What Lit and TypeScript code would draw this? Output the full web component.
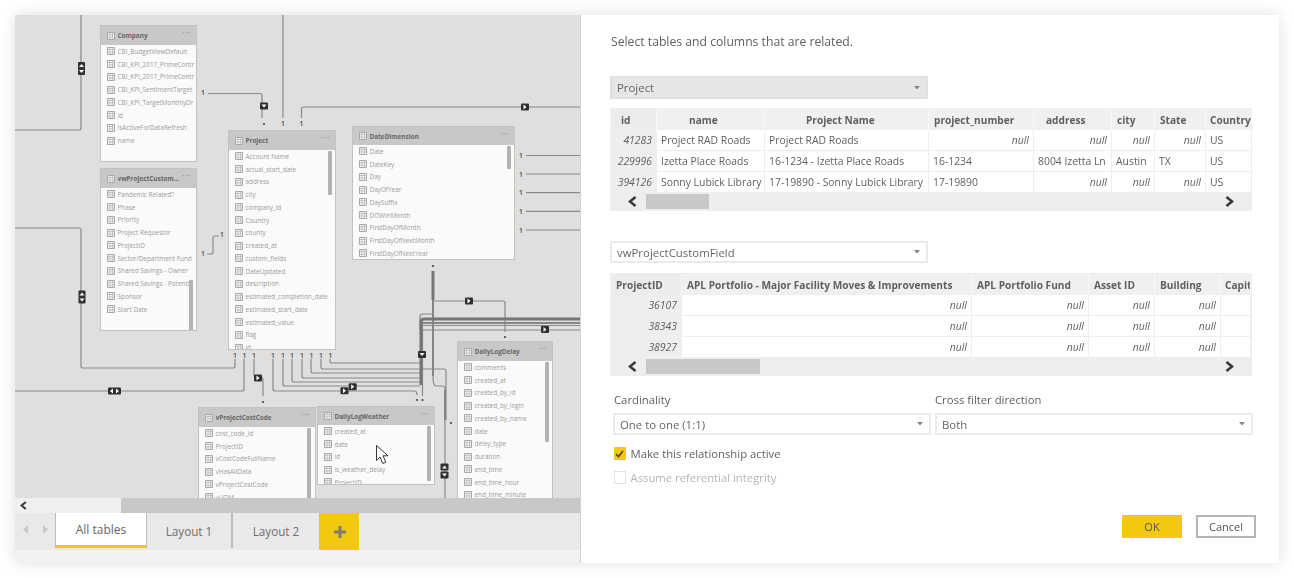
import { LitElement, html, css, svg } from "lit";
import { customElement } from "lit/decorators.js";

interface TableNode { name: string; x: number; y: number; w: number; h: number; head: number; rows: string[]; thumb?: [number, number, number]; }

const NODES: TableNode[] = [
  { name: "Company", x: 100, y: 25, w: 97, h: 137, head: 19, rows: ["CBI_BudgetViewDefault", "CBI_KPI_2017_PrimeContr", "CBI_KPI_2017_PrimeContr", "CBI_KPI_SentimentTarget", "CBI_KPI_TargetMonthlyDr", "id", "IsActiveForDataRefresh", "name"] },
  { name: "vwProjectCustom...", x: 100, y: 168, w: 97, h: 163, head: 19, thumb: [88, 111, 51], rows: ["Pandemic Related?", "Phase", "Priority", "Project Requestor", "ProjectID", "Sector/Department Fund", "Shared Savings - Owner", "Shared Savings - Potenti", "Sponsor", "Start Date"] },
  { name: "Project", x: 228, y: 130, w: 108, h: 220, head: 19, thumb: [99, 20, 44], rows: ["Account Name", "actual_start_date", "address", "city", "company_id", "Country", "county", "created_at", "custom_fields", "DateUpdated", "description", "estimated_completion_date", "estimated_start_date", "estimated_value", "flag", "id"] },
  { name: "DateDimension", x: 352, y: 126, w: 163, h: 134, head: 18, thumb: [154, 19, 23], rows: ["Date", "DateKey", "Day", "DayOfYear", "DaySuffix", "DOWInMonth", "FirstDayOfMonth", "FirstDayOfNextMonth", "FirstDayOfNextYear"] },
  { name: "vProjectCostCode", x: 198, y: 407, w: 118, h: 100, head: 19, thumb: [108, 20, 80], rows: ["cost_code_id", "ProjectID", "vCostCodeFullName", "vHasAllData", "vProjectCostCode", "vUOM"] },
  { name: "DailyLogWeather", x: 317, y: 406, w: 118, h: 79, head: 18, thumb: [109, 19, 55], rows: ["created_at", "date", "id", "is_weather_delay", "ProjectID"] },
  { name: "DailyLogDelay", x: 457, y: 341, w: 96, h: 170, head: 19, thumb: [87, 20, 80], rows: ["comments", "created_at", "created_by_id", "created_by_login", "created_by_name", "date", "delay_type", "duration", "end_time", "end_time_hour", "end_time_minute"] },
];

const LINES = [
  "M15 130H79q2 0 2-2V15",
  "M15 228H79q2 0 2 2V366q0 2 2 2H233q2 0 2-2V359",
  "M15 391H242q2 0 2-2V359",
  "M208 93.500H260q2 0 2 2V118",
  "M283 15V118",
  "M301.500 118V109q0-2 2-2H580",
  "M207 254H211q2 0 2-2V238q0-2 2-2H219",
  "M526 155.500H580", "M526 174H580", "M526 192.700H580", "M526 211.300H580", "M526 230H580",
  "M433 301H503q2 0 2 2V332",
  "M330 359V361q0 2 2 2H420",
  "M321 359V367q0 2 2 2H420",
  "M311 359V371q0 2 2 2H420",
  "M302 359V376q0 2 2 2H420",
  "M292 359V380q0 2 2 2H420",
  "M283 359V384q0 2 2 2H420",
  "M273 359V389q0 2 2 2H414q3 0 3 3V395",
  "M254 359V375q0 2 2 2H261q2 0 2 3V396",
  "M423 369H444q2 0 2 2V420",
  "M433 376q0 10 3 10H443q2 0 2 3V498",
  "M422.500 396V323",
  "M420 330V317q0-3 3-3H432",
  "M420 325.500H580", "M420 330H580",
];
const MEDIUM = ["M433 300V376", "M420 323H580", "M445 390V420"];
const THICK = ["M433 271V300", "M421 385V322q0-3 3-3H580"];

const ONES: [number, number][] = [
  [203, 95], [283, 126], [301.5, 126], [222, 237], [203, 256],
  [521, 158], [521, 177], [521, 195], [521, 214], [521, 233],
  [235, 358], [244.500, 358], [254, 358], [273, 358], [283, 358], [292, 358], [302, 358], [311.500, 358], [321, 358], [330.500, 358],
];
const STARS: [number, number][] = [[264, 126], [433, 268], [505, 339], [417, 402], [422.500, 402], [451, 425], [263, 404]];

type Mark = [number, number, "up" | "down" | "left" | "fwd" | "both-v" | "both-h"];
const MARKS: Mark[] = [
  [81.5, 68.5, "both-v"], [82, 297, "both-v"], [114.5, 391, "both-h"], [264, 106, "down"],
  [525, 107, "fwd"], [258, 378, "fwd"], [469, 301, "fwd"], [545, 329.5, "fwd"],
  [422, 354.5, "down"], [352.7, 386.7, "fwd"], [344.5, 390.7, "fwd"], [444.5, 467, "up"], [444.5, 475, "down"],
];

const tri = (x: number, y: number, d: string) => {
  const p = d === "up" ? `M${x - 2.5} ${y + 1.5}h5l-2.500-3z` : d === "down" ? `M${x - 2.5} ${y - 1.5}h5l-2.500 3z` : d === "left" ? `M${x + 1.5} ${y - 2.5}v5l-3-2.500z` : `M${x - 1.5} ${y - 2.5}v5l3-2.500z`;
  return svg`<path d=${p} fill="#fff"/>`;
};

const mark = ([x, y, d]: Mark) => {
  if (d === "both-v") return svg`<rect x=${x - 3.5} y=${y - 6.5} width="7" height="13" rx="1" fill="#2f2f2f"/>${tri(x, y - 3, "up")}${tri(x, y + 3, "down")}`;
  if (d === "both-h") return svg`<rect x=${x - 6.5} y=${y - 3.5} width="13" height="7" rx="1" fill="#2f2f2f"/>${tri(x - 3, y, "left")}${tri(x + 3, y, "fwd")}`;
  return svg`<rect x=${x - 4} y=${y - 3.5} width="8" height="7" rx="1" fill="#2f2f2f"/>${tri(x, y, d)}`;
};

const gridIcon = html`<svg class="gi" viewBox="0 0 8 8"><path d="M.5.5h7v7h-7z" fill="#f4f4f4" stroke="#a8a8a8"/><path d="M.5 2.500h7M.5 5h7M3 .5v7M5.500.5v7" stroke="#b4b4b4" stroke-width=".7"/></svg>`;

const chevL = html`<svg class="chev" viewBox="0 0 9 11"><path d="M7.500 1L2 5.500l5.500 4.500" fill="none" stroke="#3a3a3a" stroke-width="2.600"/></svg>`;
const chevR = html`<svg class="chev fwd" viewBox="0 0 9 11"><path d="M1.500 1L7 5.500 1.500 10" fill="none" stroke="#3a3a3a" stroke-width="2.600"/></svg>`;
const caret = html`<svg class="caret" viewBox="0 0 7 4"><path d="M0 0h7L3.500 4z" fill="#858585"/></svg>`;

interface Col { name: string; w: number; pl: number; }
interface DataT { cols: Col[]; rows: string[][]; thumb: number; }
const T1: DataT = {
  thumb: 63,
  cols: [
    { name: "id", w: 45, pl: 9 }, { name: "name", w: 108, pl: 32 }, { name: "Project Name", w: 164, pl: 41 },
    { name: "project_number", w: 105, pl: 5 }, { name: "address", w: 78, pl: 12 }, { name: "city", w: 43, pl: 5 },
    { name: "State", w: 51, pl: 5 }, { name: "Country", w: 46, pl: 4 },
  ],
  rows: [
    ["41283", "Project RAD Roads", "Project RAD Roads", "null", "null", "null", "null", "US"],
    ["229996", "Izetta Place Roads", "16-1234 - Izetta Place Roads", "16-1234", "8004 Izetta Ln", "Austin", "TX", "US"],
    ["394126", "Sonny Lubick Library", "17-19890 - Sonny Lubick Library", "17-19890", "null", "null", "null", "US"],
  ],
};
const T2: DataT = {
  thumb: 114,
  cols: [
    { name: "ProjectID", w: 70, pl: 4 }, { name: "APL Portfolio - Major Facility Moves & Improvements", w: 290, pl: 5 },
    { name: "APL Portfolio Fund", w: 117, pl: 5 }, { name: "Asset ID", w: 66, pl: 5 }, { name: "Building", w: 66, pl: 5 }, { name: "Capit", w: 30, pl: 4 },
  ],
  rows: [
    ["36107", "null", "null", "null", "null", ""],
    ["38343", "null", "null", "null", "null", ""],
    ["38927", "null", "null", "null", "null", ""],
  ],
};

@customElement("app-root")
export class AppRoot extends LitElement {
  static styles = css`
    :host { display: block; width: 1294px; height: 578px; box-sizing: border-box; padding: 15px; background: #fff; font-family: "Open Sans", "Noto Sans", sans-serif; overflow: hidden; }
    .win { display: flex; width: 1264px; height: 548px; box-shadow: 0 0 14px rgba(0,0,0,.13); background: #fff; filter: blur(.4px); }
    .left { width: 566px; display: flex; flex-direction: column; border-right: 1px solid #d2d2d0; box-sizing: border-box; background: #f3f2f1; }
    .canvas { position: relative; height: 483px; background: #e0dfdd; overflow: hidden; flex: none; }
    .wires { position: absolute; inset: 0; width: 565px; height: 483px; }
    .wires text { font-family: "Open Sans", sans-serif; font-size: 7.500px; font-weight: 600; fill: #555; text-anchor: middle; }
    .node { position: absolute; box-sizing: border-box; background: #fafafa; border: 1px solid #c2c2c0; overflow: hidden; }
    .nhead { display: flex; align-items: center; background: #c8c8c8; font-size: 6.400px; font-weight: 700; color: #666; padding: 0 5px 0 6px; gap: 2.500px; box-sizing: border-box; }
    .nhead .nm { flex: 1; white-space: nowrap; overflow: hidden; }
    .nhead .dots { color: #a2a2a2; font-size: 8px; letter-spacing: .6px; line-height: 4px; padding-bottom: 5px; }
    .nrows { padding: 0 0 0 6px; overflow: hidden; }
    .nrow { display: flex; align-items: center; gap: 2.500px; height: 12.750px; font-size: 6.400px; color: #9a9a9a; white-space: nowrap; overflow: hidden; }
    .gi { width: 8px; height: 8px; flex: none; }
    .thumb { position: absolute; width: 4px; background: #b2b2b2; border-radius: 1px; }
    .cursor { position: absolute; left: 0; top: 0; }
    .hscroll { flex: none; height: 15px; background: #c8c8c8; display: flex; }
    .hscroll .track { width: 106px; background: #efefef; display: flex; align-items: center; padding-left: 5px; box-sizing: border-box; }
    .hscroll .chev { margin: 0; width: 7px; height: 9px; }
    .tabs { flex: none; height: 37px; background: #e9e9e9; display: flex; }
    .pager { width: 40px; display: flex; align-items: center; justify-content: space-around; padding: 0 1px 4px 1px; box-sizing: border-box; }
    .pager svg { width: 6px; height: 9px; }
    .tab { box-sizing: border-box; height: 35px; display: flex; align-items: center; justify-content: center; font-size: 11.700px; color: #6f6f6f; border-left: 1px solid #bdbdbd; }
    .tab.on { width: 91px; background: #fff; border-bottom: 3px solid #f2c811; color: #666; font-size: 12px; }
    .tab.a { width: 85px; }
    .tab.b { width: 88px; border-left-width: 2px; }
    .add { width: 40px; height: 37px; background: #f2c811; border-left: 1px solid #bdbdbd; box-sizing: border-box; display: flex; align-items: center; justify-content: center; }
    .add svg { width: 12px; height: 12px; }
    .foot { flex: 1; }

    .panel { flex: 1; box-sizing: border-box; padding: 18px 23px 0 29px; color: #5f5f5f; font-size: 11.300px; }
    .title { height: 18px; line-height: 18px; margin-left: 1px; font-size: 12.200px; }
    .dd { box-sizing: border-box; display: flex; align-items: center; justify-content: space-between; width: 318px; height: 23px; padding: 0 6px 0 5px; border: 2px solid #eaeaea; background: #fff; font-size: 11.400px; color: #666; }
    .dd.sel { background: #e6e6e6; border-color: #e0e0e0; }
    .caret { width: 6px; height: 3.500px; }
    .m1 { margin-top: 25px; }
    .dd.t2 { margin-top: 30px; height: 22px; }
    .tbl { box-sizing: border-box; width: 642px; height: 103px; margin-top: 9px; background: #eee; padding: 1px 1px 1px 2px; overflow: hidden; }
    .tbl.b { margin-top: 10px; }
    .grid { display: grid; grid-auto-rows: 21px; overflow: hidden; height: 84px; font-size: 10.400px; }
    .hc { font-weight: 700; font-size: 10.150px; color: #5f5f5f; display: flex; align-items: center; background: #f0f0f0; border-right: 1px solid #f9f9f9; white-space: nowrap; overflow: hidden; box-sizing: border-box; }
    .hc.k { background: #ececec; }
    .c { background: #fff; border-right: 1px solid #eee; border-bottom: 1.500px solid #eee; box-sizing: border-box; display: flex; align-items: center; padding: 0 4px; color: #5f5f5f; white-space: nowrap; overflow: hidden; }
    .c.k { background: #eee; justify-content: flex-end; font-style: italic; }
    .c.nul { justify-content: flex-end; font-style: italic; }
    .bar { display: flex; align-items: center; height: 17px; }
    .chev { width: 9px; height: 11px; margin-left: 16px; flex: none; }
    .chev.fwd { margin-left: auto; margin-right: 17px; }
    .th { height: 15px; background: #c8c8c8; margin-left: 9px; }
    .form { display: grid; grid-template-columns: 318px 318px; column-gap: 4px; margin: 15px 0 0 3px; }
    .lab { height: 18px; line-height: 18px; margin-bottom: 4px; margin-left: 1px; font-size: 11.300px; }
    .lab.x { margin-left: 0; }
    .form .dd { height: 22px; }
    .chk { display: flex; align-items: center; gap: 5px; height: 13px; margin-left: 3.500px; font-size: 11.300px; }
    .chk.c1 { margin-top: 12px; }
    .chk.c2 { margin-top: 11px; color: #b4b4b4; }
    .box { width: 12px; height: 13px; box-sizing: border-box; flex: none; background: #f2c811; display: flex; align-items: center; justify-content: center; }
    .chk.c2 .box { background: #fff; border: 1px solid #e4e4e4; }
    .box svg { width: 9px; height: 8px; }
    .btns { display: flex; justify-content: flex-end; gap: 14px; margin-top: 31px; }
    .btn { box-sizing: border-box; width: 60px; height: 23px; font-size: 11px; display: flex; align-items: center; justify-content: center; color: #555; background: #fff; border: 2px solid #b4b4b4; }
    .btn.ok { background: #f2c811; border: none; }
  `;

  private node(n: TableNode) {
    const place = `left:${n.x - 15}px;top:${n.y - 15}px;width:${n.w}px;height:${n.h}px`;
    return html`<div class="node" style=${place}>
      <div class="nhead" style="height:${n.head}px">${gridIcon}<span class="nm">${n.name}</span><span class="dots">···</span></div>
      <div class="nrows">${n.rows.map((r) => html`<div class="nrow">${gridIcon}<span>${r}</span></div>`)}</div>
      ${n.thumb ? html`<div class="thumb" style="left:${n.thumb[0]}px;top:${n.thumb[1]}px;height:${n.thumb[2]}px"></div>` : ""}
    </div>`;
  }

  private table(t: DataT, second = false) {
    const tmpl = t.cols.map((c) => `${c.w}px`).join(" ");
    return html`<div class="tbl ${second ? "b" : ""}">
      <div class="grid" style="grid-template-columns:${tmpl}">
        ${t.cols.map((c, i) => html`<div class="hc ${i === 0 ? "k" : ""}" style="padding-left:${c.pl}px">${c.name}</div>`)}
        ${t.rows.map((r) => r.map((v, i) => html`<div class="c ${i === 0 ? "k" : ""} ${v === "null" ? "nul" : ""}">${v}</div>`))}
      </div>
      <div class="bar">${chevL}<div class="th" style="width:${t.thumb}px"></div>${chevR}</div>
    </div>`;
  }

  render() {
    return html`<div class="win">
      <div class="left">
        <div class="canvas">
          <svg class="wires" viewBox="15 15 565 483">
            ${LINES.map((d) => svg`<path d=${d} fill="none" stroke="#8a8a8a" stroke-width="1.200"/>`)}
            ${MEDIUM.map((d) => svg`<path d=${d} fill="none" stroke="#858585" stroke-width="2"/>`)}
            ${THICK.map((d) => svg`<path d=${d} fill="none" stroke="#757575" stroke-width="3"/>`)}
            ${ONES.map(([x, y]) => svg`<text x=${x} y=${y}>1</text>`)}
            ${STARS.map(([x, y]) => svg`<circle cx=${x} cy=${y - 2} r="1.100" fill="#444"/>`)}
            ${MARKS.map(mark)}
          </svg>
          ${NODES.map((n) => this.node(n))}
          <svg class="cursor" width="565" height="483" viewBox="15 15 565 483"><path d="M376.500 445.500V460.500L380 457l2.800 6.500 3-1.300-2.800-6.400h5z" fill="#fff" stroke="#222" stroke-width=".9"/></svg>
        </div>
        <div class="hscroll"><div class="track">${chevL}</div></div>
        <div class="tabs">
          <div class="pager">
            <svg viewBox="0 0 6 9"><path d="M5 0v9L0 4.500z" fill="#c8c8c8"/></svg>
            <svg viewBox="0 0 6 9"><path d="M1 0v9l5-4.500z" fill="#c8c8c8"/></svg>
          </div>
          <div class="tab on">All tables</div>
          <div class="tab a">Layout 1</div>
          <div class="tab b">Layout 2</div>
          <div class="add"><svg viewBox="0 0 12 12"><path d="M4.500 0h3v4.500H12v3H7.500V12h-3V7.500H0v-3h4.500z" fill="#7d7d72"/></svg></div>
        </div>
        <div class="foot"></div>
      </div>
      <div class="panel">
        <div class="title">Select tables and columns that are related.</div>
        <div class="dd sel m1"><span>Project</span>${caret}</div>
        ${this.table(T1)}
        <div class="dd t2"><span>vwProjectCustomField</span>${caret}</div>
        ${this.table(T2, true)}
        <div class="form">
          <div><div class="lab">Cardinality</div><div class="dd"><span>One to one (1:1)</span>${caret}</div></div>
          <div><div class="lab x">Cross filter direction</div><div class="dd"><span>Both</span>${caret}</div></div>
        </div>
        <div class="chk c1"><span class="box"><svg viewBox="0 0 9 8"><path d="M1 4l2.500 2.500L8 1" fill="none" stroke="#4b4200" stroke-width="1.600"/></svg></span>Make this relationship active</div>
        <div class="chk c2"><span class="box"></span>Assume referential integrity</div>
        <div class="btns"><div class="btn ok">OK</div><div class="btn">Cancel</div></div>
      </div>
    </div>`;
  }
}
